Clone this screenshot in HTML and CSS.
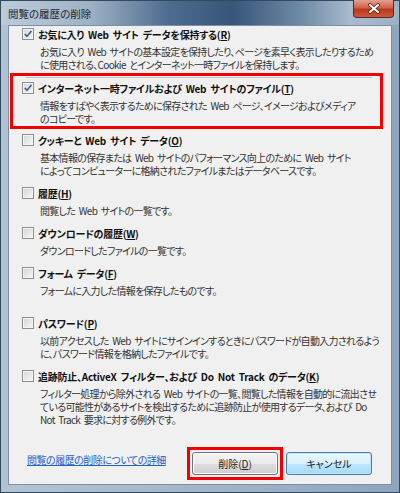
FILE: index.html
```html
<!DOCTYPE html>
<html lang="ja">
<head>
    <meta charset="UTF-8">
    <title>閲覧の履歴の削除</title>
    <link rel="stylesheet" href="styles.css">
</head>
<body>
    <div class="window">
        <div class="titlebar">
            <span class="title">閲覧の履歴の削除</span>
            <span class="close">
                <svg width="14" height="11" viewBox="0 0 14 11">
                    <path d="M3 2 L11 9 M11 2 L3 9" stroke="#5a2418" stroke-width="3.6" stroke-linecap="round"/>
                    <path d="M3 2 L11 9 M11 2 L3 9" stroke="#fff" stroke-width="2" stroke-linecap="round"/>
                </svg>
            </span>
        </div>

        <div class="client">
            <!-- Favorites -->
            <div class="item">
                <div class="label"><span class="box checked"><svg width="10" height="10" viewBox="0 0 10 10"><path d="M1.8 5 L4 7.4 L8.4 2" fill="none" stroke="#45598a" stroke-width="1.6"/></svg></span>お気に入り Web サイト データを保持する(<u>R</u>)</div>
                <p class="desc">お気に入り Web サイトの基本設定を保持したり、ページを素早く表示したりするため<br>に使用される、Cookie とインターネット一時ファイルを保持します。</p>
            </div>

            <!-- Temporary files (highlighted) -->
            <div class="highlight">
                <div class="rule"></div>
                <div class="item">
                    <div class="label"><span class="box checked"><svg width="10" height="10" viewBox="0 0 10 10"><path d="M1.8 5 L4 7.4 L8.4 2" fill="none" stroke="#45598a" stroke-width="1.6"/></svg></span>インターネット一時ファイルおよび Web サイトのファイル(<u>T</u>)</div>
                    <p class="desc">情報をすばやく表示するために保存された Web ページ、イメージおよびメディア<br>のコピーです。</p>
                </div>
            </div>

            <div class="item">
                <div class="label"><span class="box"></span>クッキーと Web サイト データ(<u>O</u>)</div>
                <p class="desc">基本情報の保存または Web サイトのパフォーマンス向上のために Web サイト<br>によってコンピューターに格納されたファイルまたはデータベースです。</p>
            </div>

            <div class="item">
                <div class="label"><span class="box"></span>履歴(<u>H</u>)</div>
                <p class="desc">閲覧した Web サイトの一覧です。</p>
            </div>

            <div class="item">
                <div class="label"><span class="box"></span>ダウンロードの履歴(<u>W</u>)</div>
                <p class="desc">ダウンロードしたファイルの一覧です。</p>
            </div>

            <div class="item">
                <div class="label"><span class="box"></span>フォーム データ(<u>F</u>)</div>
                <p class="desc">フォームに入力した情報を保存したものです。</p>
            </div>

            <div class="item wide">
                <div class="label"><span class="box"></span>パスワード(<u>P</u>)</div>
                <p class="desc">以前アクセスした Web サイトにサインインするときにパスワードが自動入力されるよう<br>に、パスワード情報を格納したファイルです。</p>
            </div>

            <div class="item">
                <div class="label"><span class="box"></span>追跡防止、ActiveX フィルター、および Do Not Track のデータ(<u>K</u>)</div>
                <p class="desc">フィルター処理から除外される Web サイトの一覧、閲覧した情報を自動的に流出させ<br>ている可能性があるサイトを検出するために追跡防止が使用するデータ、および Do<br>Not Track 要求に対する例外です。</p>
            </div>

            <div class="footer">
                <a class="link" href="#">閲覧の履歴の削除についての詳細</a>
                <div class="mark">
                    <button class="btn">削除(<u>D</u>)</button>
                </div>
                <button class="btn default">キャンセル</button>
            </div>
        </div>
    </div>
</body>
</html>
```

FILE: styles.css
```css
* {
    box-sizing: border-box;
}

body {
    margin: 0;
    font-family: "Noto Sans CJK JP", "Noto Sans", sans-serif;
    font-feature-settings: "palt";
    font-size: 10px;
    color: #222;
}

.window {
    width: 400px;
    height: 493px;
    border: 1px solid #34495e;
    padding: 0 7px 7px;
    background: linear-gradient(90deg, #b2c4d4, #9fb3c6 60%, #8ea5bb);
    display: flex;
    flex-direction: column;
}

.titlebar {
    height: 24px;
    margin: 0 -7px;
    padding: 0 5px 0 7px;
    display: flex;
    align-items: center;
    background: linear-gradient(90deg, #bccbd9 0%, #9fb3c6 22%, #4d6c8f 42%, #365578 58%, #6d89a5 75%, #a9bbcc 88%, #9db1c5 100%);
}

.title {
    font-size: 10.5px;
    color: #1b2530;
    margin-top: 1px;
}

.close {
    margin-left: auto;
    align-self: flex-start;
    margin-top: -1px;
    width: 41px;
    height: 18px;
    border: 1px solid #5b2a22;
    border-top: none;
    border-radius: 0 0 4px 4px;
    background: linear-gradient(#e3a08f, #d2624a 45%, #b8391c 55%, #d0583a);
    display: flex;
    align-items: center;
    justify-content: center;
}

.client {
    flex: 1;
    background: #f0f0f0;
    border: 1px solid #7d8fa2;
    padding: 0 13px;
    display: flex;
    flex-direction: column;
}

.item {
    margin-top: 8px;
}

.item:first-child {
    margin-top: 0;
}

.item.wide {
    margin-top: 18px;
}

.label {
    display: flex;
    align-items: center;
    height: 16px;
    font-weight: bold;
    color: #111;
    letter-spacing: -0.25px;
    word-spacing: 2px;
    white-space: nowrap;
}

.box {
    width: 12px;
    height: 12px;
    margin-right: 4px;
    border: 1px solid #8e8f8f;
    background: linear-gradient(135deg, #d2d5da, #f7f7f7);
    box-shadow: inset 0 0 0 1px #f4f4f4;
    display: flex;
    align-items: center;
    justify-content: center;
    flex-shrink: 0;
}

.desc {
    margin: 3px 0 0 18px;
    line-height: 13px;
    color: #333;
    letter-spacing: -0.7px;
    word-spacing: 2px;
    white-space: nowrap;
}

.highlight {
    margin: 2px -5px 0 -12px;
    border: 3px solid #f20000;
    padding: 1px 0 1px 9px;
}

.highlight .item {
    margin-top: 2px;
}

.highlight + .item {
    margin-top: 3px;
}

.rule {
    height: 1px;
    margin: 0 8px 0 4px;
    background: #c4c4c4;
}

.footer {
    margin-top: 21px;
    display: flex;
    align-items: center;
}

.link {
    margin: 0 auto 9px 5px;
    color: #1f62c6;
    letter-spacing: -0.5px;
    text-decoration: underline;
}

.mark {
    border: 3px solid #f20000;
    padding: 2px;
}

.btn {
    width: 86px;
    height: 23px;
    font-family: inherit;
    font-feature-settings: "palt";
    font-size: 10px;
    color: #222;
    border: 1px solid #707070;
    border-radius: 3px;
    background: linear-gradient(#f3f3f3, #ebebeb 50%, #dddddd 51%, #cfcfcf);
    box-shadow: inset 0 0 0 1px #fbfbfb;
    padding: 0;
}

.btn.default {
    margin: 0 6px 0 3px;
    border-color: #3c7fb1;
    background: linear-gradient(#eaf6fd, #d9f0fc 50%, #bee6fd 51%, #a7d9f5);
    box-shadow: inset 0 0 0 1px #c4e5f6;
}
```
